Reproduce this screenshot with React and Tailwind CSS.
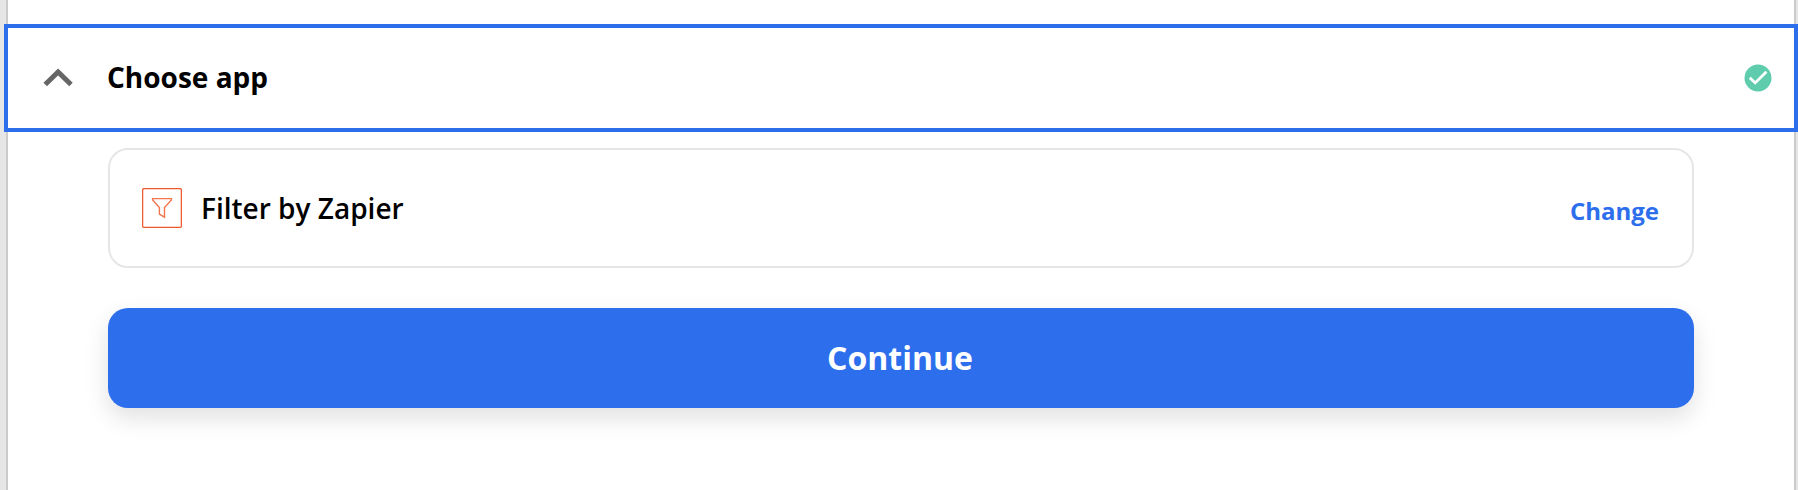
function ChevronUp() {
  return (
    <svg width="30" height="20" viewBox="0 0 30 20" fill="none" className="shrink-0">
      <path d="M2.2 16.5 15.1 3.9 28 16.5" stroke="#666" strokeWidth="5" />
    </svg>
  );
}

function CheckBadge() {
  return (
    <svg width="28" height="28" viewBox="0 0 28 28" fill="none" className="shrink-0">
      <circle cx="14" cy="14" r="13.5" fill="#5fcdad" />
      <path d="M5.8 13.7 11.2 18.9 22.4 7.7" stroke="#fff" strokeWidth="2.8" />
    </svg>
  );
}

function FilterIcon() {
  return (
    <svg width="40" height="40" viewBox="0 0 40 40" fill="none" className="shrink-0">
      <rect x="0.6" y="0.6" width="38.8" height="38.8" rx="1.5" stroke="#f0592b" strokeWidth="1.3" />
      <path
        d="M10.6 10.6H29.4V12L22.5 19.5V29.2L17.4 26.2V19.5L10.6 12Z"
        stroke="#f4754d"
        strokeWidth="1.4"
      />
    </svg>
  );
}

export default function App() {
  return (
    <div className="h-[490px] w-[1798px] overflow-hidden bg-[#e6e6e6] pr-0.5 pl-1.5 font-['Open_Sans',sans-serif] text-black">
      <main className="h-full border-x-2 border-[#cbcbcb] bg-white pt-6">
        <header className="-mx-1 flex h-[108px] items-center border-4 border-[#2d6eed] bg-white pr-[22px] pl-[35px]">
          <ChevronUp />
          <h2 className="ml-[34px] grow pb-0.5 text-[28px] leading-9 font-bold">Choose app</h2>
          <CheckBadge />
        </header>
        <section className="mt-4 mr-[100px] ml-[100px]">
          <div className="flex h-[120px] items-center rounded-[20px] border-2 border-[#e6e6e6] pr-[33px] pl-8">
            <FilterIcon />
            <span className="ml-[19px] grow text-[28px] leading-9 font-semibold">Filter by Zapier</span>
            <button className="pt-1.5 text-[24px] leading-8 font-bold text-[#2d6eed]">Change</button>
          </div>
          <button className="mt-10 flex h-[100px] w-full items-center justify-center rounded-[20px] bg-[#2d6eed] pr-0.5 text-[32px] font-bold text-white shadow-[0_10px_24px_rgba(0,0,0,0.12)]">
            Continue
          </button>
        </section>
      </main>
    </div>
  );
}
